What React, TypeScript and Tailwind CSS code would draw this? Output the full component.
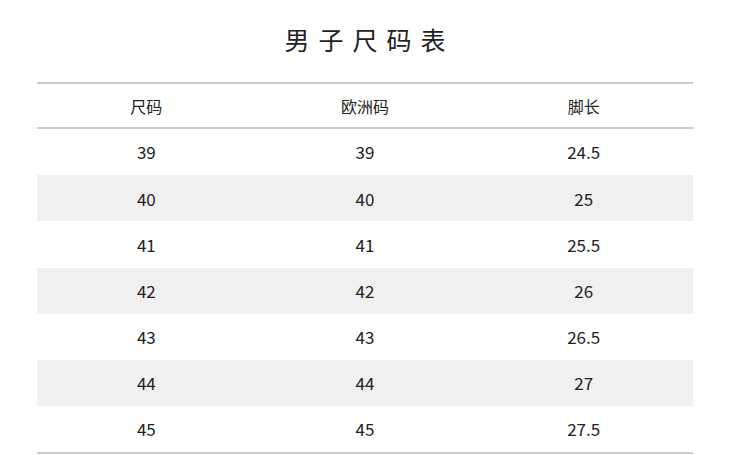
import React from "react";

const rows: [string, string, string][] = [
  ["39", "39", "24.5"],
  ["40", "40", "25"],
  ["41", "41", "25.5"],
  ["42", "42", "26"],
  ["43", "43", "26.5"],
  ["44", "44", "27"],
  ["45", "45", "27.5"],
];

const App: React.FC = () => {
  return (
    <div
      className="w-[730px] h-[455px] bg-white text-[#222] overflow-hidden"
      style={{ fontFamily: '"Noto Sans CJK SC", "Noto Sans", sans-serif' }}
    >
      <h1 className="h-[82px] flex items-center justify-center text-[25px] tracking-[9px] pl-[9px] pb-[2px]">
        男子尺码表
      </h1>
      <div className="mx-[37px] border-y-2 border-[#cccccc]">
        <div className="grid grid-cols-3 h-[45px] items-center text-center text-[16px] border-b-2 border-[#cccccc]">
          <div>尺码</div>
          <div>欧洲码</div>
          <div>脚长</div>
        </div>
        {rows.map((r, i) => (
          <div
            key={i}
            className={`grid grid-cols-3 h-[46.2px] items-center text-center text-[17px] ${
              i % 2 === 1 ? "bg-[#f0f0f0]" : "bg-white"
            }`}
          >
            <div>{r[0]}</div>
            <div>{r[1]}</div>
            <div>{r[2]}</div>
          </div>
        ))}
      </div>
    </div>
  );
};

export default App;
